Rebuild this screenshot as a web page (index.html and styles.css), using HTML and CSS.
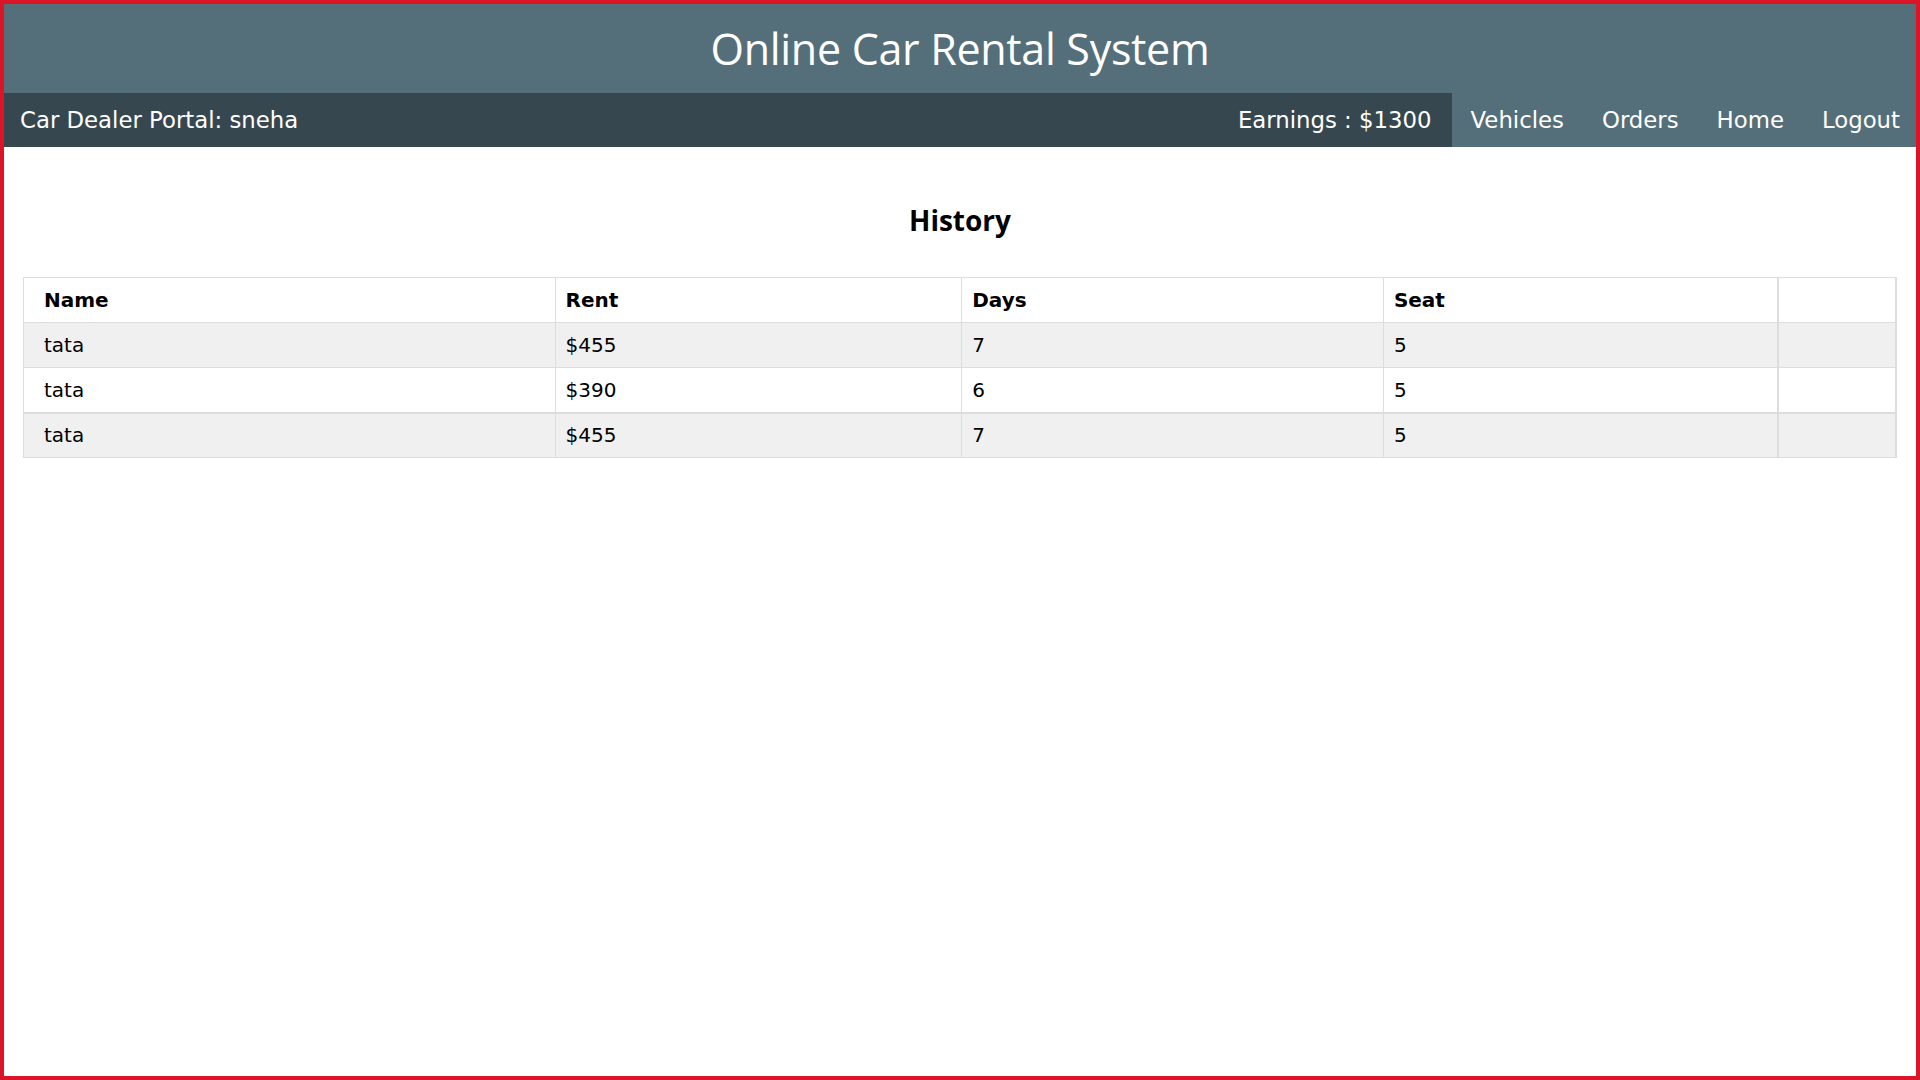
FILE: index.html
```html
<!DOCTYPE html>
<html lang="en">
<head>
<meta charset="utf-8">
<title>Online Car Rental System</title>
<link rel="stylesheet" href="styles.css">
</head>
<body>
<div class="frame">
  <header class="site-header">
    <h1 class="site-title">Online Car Rental System</h1>
  </header>
  <nav class="navbar">
    <div class="portal">Car Dealer Portal: sneha</div>
    <div class="nav-right">
      <span class="earnings">Earnings : $1300</span>
      <div class="links">
        <a class="link" href="#">Vehicles</a>
        <a class="link" href="#">Orders</a>
        <a class="link" href="#">Home</a>
        <a class="link" href="#">Logout</a>
      </div>
    </div>
  </nav>
  <main class="content">
    <h2 class="section-title">History</h2>
    <table class="history">
      <colgroup>
        <col class="c-name"><col class="c-rent"><col class="c-days"><col class="c-seat"><col class="c-extra">
      </colgroup>
      <tbody>
        <tr class="head-row"><th>Name</th><th>Rent</th><th>Days</th><th>Seat</th><th class="extra"></th></tr>
        <tr class="striped"><td>tata</td><td>$455</td><td>7</td><td>5</td><td class="extra"></td></tr>
        <tr><td>tata</td><td>$390</td><td>6</td><td>5</td><td class="extra"></td></tr>
        <tr class="striped sep"><td>tata</td><td>$455</td><td>7</td><td>5</td><td class="extra"></td></tr>
      </tbody>
    </table>
  </main>
</div>
</body>
</html>
```
FILE: styles.css
```css
* { box-sizing: border-box; }
html, body { margin: 0; padding: 0; height: 100%; }
body {
  background: #ffffff;
  font-family: "DejaVu Sans", Verdana, sans-serif;
  color: #000;
}
.frame {
  height: 100vh;
  border: 4px solid #dc1428;
  display: flex;
  flex-direction: column;
}
.site-header {
  background: #546e7a;
  height: 89px;
  display: flex;
  align-items: center;
  justify-content: center;
}
.site-title {
  margin: 0;
  font-family: "Open Sans", "Noto Sans", sans-serif;
  font-weight: 400;
  font-size: 43px;
  color: #fff;
  letter-spacing: -0.3px;
  line-height: 1;
}
.navbar {
  background: #37474f;
  height: 54px;
  display: flex;
  align-items: stretch;
  justify-content: space-between;
  color: #fff;
  font-family: "DejaVu Sans", Verdana, sans-serif;
  font-size: 22.8px;
}
.portal {
  display: flex;
  align-items: center;
  padding-left: 16px;
}
.nav-right {
  display: flex;
  align-items: stretch;
}
.earnings {
  display: flex;
  align-items: center;
  padding: 0 20px;
}
.links {
  display: flex;
  background: #546e7a;
}
.link {
  display: flex;
  align-items: center;
  color: #fff;
  text-decoration: none;
  padding: 0 19px;
}
.link:last-child { padding-right: 16px; }
.content {
  padding: 0 19px;
}
.section-title {
  margin: 0;
  padding-top: 48px;
  height: 130px;
  text-align: center;
  font-family: "Open Sans", "Noto Sans", sans-serif;
  font-weight: 700;
  font-size: 28px;
  line-height: 50px;
}
.history {
  width: 100%;
  border-collapse: collapse;
  border: 1px solid #dddddd;
  font-size: 20px;
}
.c-name { width: 532px; }
.c-rent { width: 407px; }
.c-days { width: 422px; }
.c-seat { width: 395px; }
.c-extra { width: 118px; }
.history th, .history td {
  text-align: left;
  padding: 0 10px;
  height: 45px;
  line-height: 24px;
  border-left: 1px solid #dddddd;
  border-bottom: 1px solid #dddddd;
  vertical-align: middle;
}
.history th:first-child, .history td:first-child { padding-left: 20px; }
.history th { font-weight: 700; }
.history .extra { border-left: 2px solid #dddddd; border-right: 2px solid #dddddd; }
.history tr.striped { background: #f0f0f0; }
.history tr.sep td { border-top: 2px solid #dddddd; }
```
